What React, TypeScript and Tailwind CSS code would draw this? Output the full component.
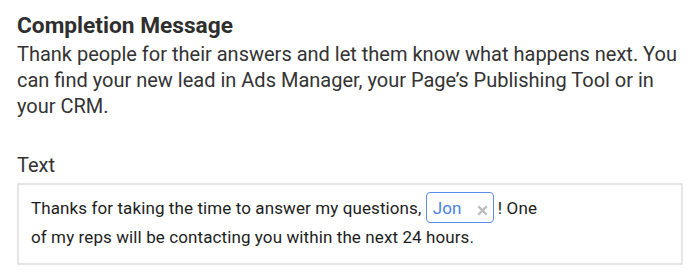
function NameChip({ name }: { name: string }) {
  return (
    <span className="inline-flex items-baseline h-[31px] pt-[5px] pl-[6px] pr-[5px] border border-[#5b8def] rounded-[4px] leading-[20px]">
      <span className="text-[#4a80e8] text-[17px]">{name}</span>
      <svg viewBox="0 0 12 12" className="w-[11px] h-[11px] ml-[15px] self-center" fill="none" stroke="#bdbdbd" strokeWidth="2.4" strokeLinecap="butt">
        <path d="M1.5 1.5 L10.5 10.5 M10.5 1.5 L1.5 10.5" />
      </svg>
    </span>
  )
}

export default function App() {
  return (
    <div className="w-[700px] h-[277px] bg-white px-[17px] pt-[13px] font-['Roboto',_'Liberation_Sans',_sans-serif] text-[#333333]">
      <h2 className="text-[22.7px] leading-[26px] font-bold text-[#2e2e2e]">Completion Message</h2>
      <p className="mt-[2px] text-[20px] leading-[26px]">
        Thank people for their answers and let them know what happens next. You can find your new lead in Ads Manager, your Page’s Publishing Tool or in your CRM.
      </p>

      <label className="block mt-[33px] text-[20px] leading-[26px]">Text</label>
      <div className="mt-[5px] w-[666px] border-2 border-[#e6e6e6] bg-white pl-[12px] pt-[7px] pb-[12px] text-[17px] tracking-[0.1px] leading-[28px] text-[#1d1d1d]">
        Thanks for taking the time to answer my questions, <NameChip name="Jon" /> ! One
        <br />
        of my reps will be contacting you within the next 24 hours.
      </div>
    </div>
  )
}
